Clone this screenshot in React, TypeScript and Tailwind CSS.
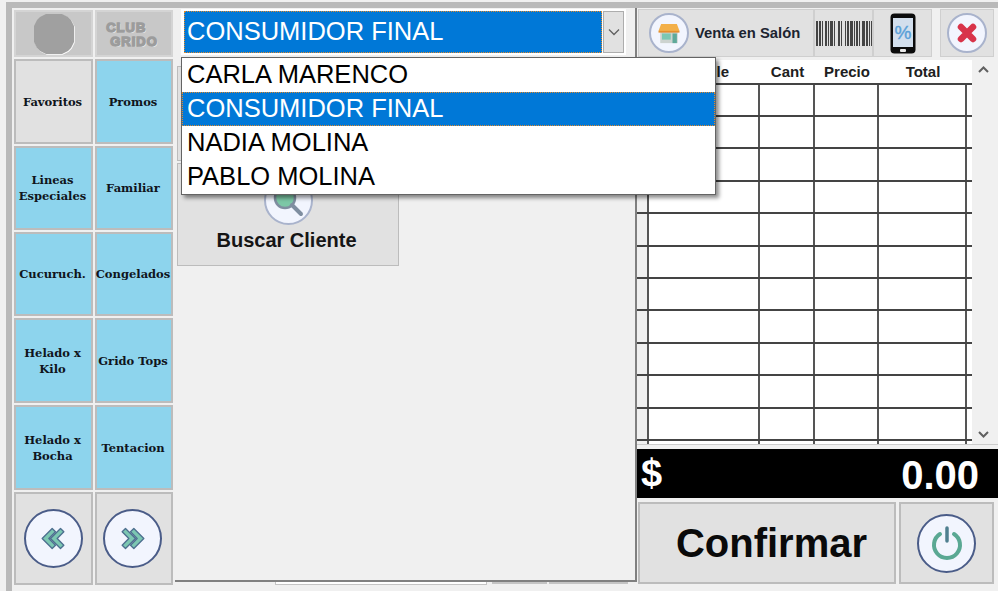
import React from "react";

const sans = "font-['Liberation_Sans',Arial,sans-serif]";
const btn = "bg-[#e1e1e1] border-2 border-[#bcbcbc] flex items-center justify-center";

function Round({ size, ring, children }: { size: string; ring: string; children: React.ReactNode }) {
  return <div className={`${size} ${ring} shrink-0 rounded-full bg-[#f2f5fe] flex items-center justify-center`}>{children}</div>;
}

function Cat({ label, tone = "bg-[#8dd4ed]" }: { label: string; tone?: string }) {
  return (
    <div className={`${tone} border-2 border-[#bcbcbc] flex items-center justify-center text-center pr-[2px] font-['DejaVu_Serif',serif] font-bold text-[11.5px] leading-[16px] text-[#10151c] whitespace-pre-line`}>
      {label}
    </div>
  );
}

function LeftArrows() {
  return (
    <svg width="30" height="25" viewBox="0 0 36 30">
      <path d="M17 3 L5 15 L17 27 L21 23 L13 15 L21 7 Z" fill="#7cc7b2" stroke="#4d6f8f" strokeWidth="1.6" strokeLinejoin="round" />
      <path d="M27 3 L15 15 L27 27 L31 23 L23 15 L31 7 Z" fill="#7cc7b2" stroke="#4d6f8f" strokeWidth="1.6" strokeLinejoin="round" />
    </svg>
  );
}

function Barcode() {
  const bars = [2,1,2,1,1,2,2,1,1,1,3,1,1,3,2,1,1,3,1,1,2,1,3,1,1,1,2,1,1,2,3,1,2,1,1,1,2,1,2,1];
  let x = 0;
  return (
    <svg width="56" height="25" viewBox="0 0 56 25">
      {bars.map((w, i) => {
        const r = i % 2 === 0 ? <rect key={i} x={x} y="0" width={w} height="25" fill="#444444" /> : null;
        x += w;
        return r;
      })}
    </svg>
  );
}

function Row({ header }: { header?: boolean }) {
  if (header) {
    return (
      <div className={`flex h-[24.6px] shrink-0 border-b-2 border-[#444444] bg-white ${sans} font-bold text-[15px] text-[#202020] text-center leading-[23px]`}>
        <div className="w-[12px] bg-[#f0f0f0]" />
        <div className="w-[111px]">Detalle</div>
        <div className="w-[55px]">Cant</div>
        <div className="w-[64px]">Precio</div>
        <div className="w-[88px]">Total</div>
        <div className="w-[5px]" />
      </div>
    );
  }
  const cell = "border-r-2 border-[#555555] bg-white";
  return (
    <div className="flex h-[32.4px] shrink-0 border-b-2 border-[#444444]">
      <div className="w-[12px] border-r-2 border-[#555555] bg-[#f0f0f0]" />
      <div className={`w-[111px] ${cell}`} />
      <div className={`w-[55px] ${cell}`} />
      <div className={`w-[64px] ${cell}`} />
      <div className={`w-[88px] ${cell}`} />
      <div className="w-[5px] bg-white" />
    </div>
  );
}

export default function App() {
  return (
    <div className="relative h-[591px] w-[998px] overflow-hidden bg-[#f0f0f0] pt-[2px] pl-[6px]">
      <div className="flex h-[589px] border-l-[6px] border-t-[6px] border-[#b9b9b9]">
        {/* Left column */}
        <div className="w-[163px] shrink-0 pl-[2px] pt-[2px]">
          <div className="grid grid-cols-[79px_78px] grid-rows-[47px_85px_84px_84px_85px_85px_93px] gap-[2px]">
            <div className="bg-[#c8c8c8] border-2 border-[#d4d4d4] flex items-center justify-center">
              <svg width="42" height="42" viewBox="0 0 42 42">
                <path d="M13 1 H29 L35 4 L38 7 L41 13 V29 L38 35 L35 38 L29 41 H13 L7 38 L4 35 L1 29 V13 L4 7 L7 4 Z" fill="#fff" transform="translate(0.7 0.7)" />
                <path d="M13 1 H29 L35 4 L38 7 L41 13 V29 L38 35 L35 38 L29 41 H13 L7 38 L4 35 L1 29 V13 L4 7 L7 4 Z" fill="#a0a0a0" />
              </svg>
            </div>
            <div className="bg-[#c8c8c8] border-2 border-[#d4d4d4] flex items-center justify-center pt-[2px]">
              <div className={`${sans} font-bold text-[13px] leading-[14px] tracking-[1px] text-[#9c9c9c] [-webkit-text-stroke:1.4px_#9c9c9c] [text-shadow:1px_1px_0_#eeeeee]`}>
                <div className="-ml-[4px]">CLUB</div>
                <div>GRIDO</div>
              </div>
            </div>
            <Cat label="Favoritos" tone="bg-[#e1e1e1]" />
            <Cat label="Promos" />
            <Cat label={"Lineas\nEspeciales"} />
            <Cat label="Familiar" />
            <Cat label="Cucuruch." />
            <Cat label="Congelados" />
            <Cat label={"Helado x\nKilo"} />
            <Cat label="Grido Tops" />
            <Cat label={"Helado x\nBocha"} />
            <Cat label="Tentacion" />
            <div className={`${btn} pr-[1px]`}>
              <Round size="w-[59px] h-[59px]" ring="border-2 border-[#4a5c88]"><LeftArrows /></Round>
            </div>
            <div className={`${btn} pr-[3px]`}>
              <Round size="w-[59px] h-[59px]" ring="border-2 border-[#4a5c88]">
                <div className="rotate-180 flex"><LeftArrows /></div>
              </Round>
            </div>
          </div>
        </div>

        {/* Middle column */}
        <div className="w-[462px] shrink-0">
          <div className="h-[574px] border-r-2 border-b-2 border-[#808080]">
            <div className="h-[49px] pt-[1px] pl-[6px]">
              <div className="flex h-[46px] w-[445px] bg-white py-[2px] pl-[3px] pr-[2px] gap-[1px]">
                <div className={`flex-1 bg-[#0078d7] border border-dotted border-[#e08a2c] ${sans} text-[25.5px] text-white leading-[38px] pl-[2px]`}>
                  CONSUMIDOR FINAL
                </div>
                <div className="w-[21px] bg-[#e1e1e1] border border-[#adadad] flex items-center justify-center">
                  <svg width="12" height="8" viewBox="0 0 12 8"><path d="M1 1.5 L6 6.5 L11 1.5" fill="none" stroke="#606060" strokeWidth="1.3" /></svg>
                </div>
              </div>
            </div>
            <div className="pl-[2px] pt-[9px] flex flex-col gap-[2px]">
              <div className="w-[222px] h-[95px] bg-[#e1e1e1] border border-[#bcbcbc]" />
              <div className="w-[222px] h-[103px] bg-[#e1e1e1] border border-[#bcbcbc] flex flex-col items-center justify-end pb-[14px]">
                <Round size="w-[49px] h-[49px] mb-[4px]" ring="border-2 border-[#a9b3cc]">
                  <svg width="34" height="34" viewBox="0 0 34 34">
                    <circle cx="14" cy="14" r="10" fill="#7cc7a6" stroke="#7f8ea0" strokeWidth="2.5" />
                    <path d="M21 21 L30 30" stroke="#7f8ea0" strokeWidth="4" strokeLinecap="round" />
                  </svg>
                </Round>
                <div className={`${sans} font-bold text-[20px] leading-[22px] text-[#151515] pr-[3px]`}>Buscar Cliente</div>
              </div>
            </div>
          </div>
          <div className="flex pl-[100px] items-start">
            <div className="w-[212px] h-[3px] bg-white border border-[#c4c4c4] border-t-0" />
            <div className="w-[55px] h-[2px] ml-[5px] bg-[#c4c4c4]" />
            <div className="w-[79px] h-[2px] ml-[2px] bg-[#c4c4c4]" />
          </div>
        </div>

        {/* Right column */}
        <div className="flex w-[361px] shrink-0 flex-col pt-[1px]">
          <div className="flex h-[48px] pl-[1px]">
            <div className="w-[176px] bg-[#e1e1e1] border border-[#cfcfcf] flex items-center pl-[10px] gap-[6px]">
              <Round size="w-[40px] h-[40px]" ring="border-2 border-[#a9b3cc]">
                <svg width="24" height="21" viewBox="0 0 26 24">
                  <rect x="3" y="8" width="20" height="15" fill="#cdd3d0" />
                  <rect x="5" y="12" width="10" height="7" fill="#7cc7b2" />
                  <rect x="17" y="12" width="5" height="11" fill="#5fa99a" />
                  <path d="M4 1 H22 L25 9 H1 Z" fill="#f3b04a" />
                  <path d="M1 9 H25 V11 H1 Z" fill="#e58e2d" />
                </svg>
              </Round>
              <span className={`${sans} font-bold text-[14.8px] text-[#1c2430] whitespace-nowrap`}>Venta en Salón</span>
            </div>
            <div className="w-[59px] bg-[#e1e1e1] border border-[#cfcfcf] flex items-center justify-center"><Barcode /></div>
            <div className="w-[59px] bg-[#e1e1e1] border border-[#cfcfcf] flex items-center justify-center">
              <svg width="26" height="41" viewBox="0 0 26 41">
                <rect x="0.5" y="0.5" width="25" height="40" rx="4" fill="#0c0c0c" />
                <rect x="3" y="5" width="20" height="29" fill="#d3dfed" />
                <rect x="10" y="36" width="6" height="3" rx="1" fill="#e8e8e8" />
                <text x="13" y="26" textAnchor="middle" fontFamily="Liberation Sans" fontSize="19" stroke="#5aa0d8" strokeWidth="0.4" fill="#5aa0d8">%</text>
              </svg>
            </div>
            <div className="w-[54px] ml-[8px] bg-[#e1e1e1] border border-[#cfcfcf] flex items-center justify-center">
              <Round size="w-[40px] h-[40px]" ring="border-2 border-[#a9b3cc]">
                <svg width="24" height="24" viewBox="0 0 24 24">
                  <path d="M6 6 L18 18 M18 6 L6 18" stroke="#d8334a" strokeWidth="6.5" strokeLinecap="round" />
                </svg>
              </Round>
            </div>
          </div>

          <div className="mt-[3px] flex h-[385px] border-b border-[#cccccc]">
            <div className="w-[335px] h-[384px] overflow-hidden flex flex-col">
              <Row header />
              {Array.from({ length: 12 }).map((_, i) => <Row key={i} />)}
            </div>
            <div className="ml-[1px] w-[21px] h-[384px] bg-[#f0f0f0] flex flex-col items-center justify-between py-[6px]">
              <svg width="11" height="7" viewBox="0 0 11 7"><path d="M1 6 L5.5 1.5 L10 6" fill="none" stroke="#606060" strokeWidth="2" /></svg>
              <svg width="11" height="7" viewBox="0 0 11 7"><path d="M1 1 L5.5 5.5 L10 1" fill="none" stroke="#606060" strokeWidth="2" /></svg>
            </div>
          </div>

          <div className={`mt-[4px] h-[49px] bg-black flex justify-between items-center pl-[4px] pr-[19px] text-white font-bold ${sans}`}>
            <span className="text-[38px] leading-[38px] -mt-[2px]">$</span>
            <span className="text-[40px] leading-[40px] mt-[2px]">0.00</span>
          </div>

          <div className="mt-[4px] flex h-[82px] pl-[1px] gap-[3px]">
            <div className={`w-[258px] ${btn} pl-[9px] ${sans} font-bold text-[40px] text-[#0a0a0a]`}>Confirmar</div>
            <div className={`w-[95px] ${btn}`}>
              <Round size="w-[59px] h-[59px]" ring="border-2 border-[#4a5c88]">
                <svg width="34" height="36" viewBox="0 0 34 36">
                  <path d="M10 9 A13 13 0 1 0 24 9" fill="none" stroke="#5aa893" strokeWidth="4" strokeLinecap="round" />
                  <path d="M17 3 V16" stroke="#4f7f8f" strokeWidth="3.5" strokeLinecap="round" />
                </svg>
              </Round>
            </div>
          </div>
        </div>
      </div>

      {/* Open dropdown list */}
      <div className={`absolute left-[181px] top-[57px] w-[535px] h-[138px] bg-white border border-[#646464] shadow-[3px_3px_4px_rgba(0,0,0,0.45)] ${sans} text-[25.5px] text-black`}>
        <div className="h-[34px] pl-[5px] leading-[32px]">CARLA MARENCO</div>
        <div className="h-[34px] pl-[4px] leading-[30px] bg-[#0078d7] text-white border border-dotted border-[#e08a2c]">CONSUMIDOR FINAL</div>
        <div className="h-[34px] pl-[5px] leading-[32px]">NADIA MOLINA</div>
        <div className="h-[34px] pl-[5px] leading-[32px]">PABLO MOLINA</div>
      </div>
    </div>
  );
}
